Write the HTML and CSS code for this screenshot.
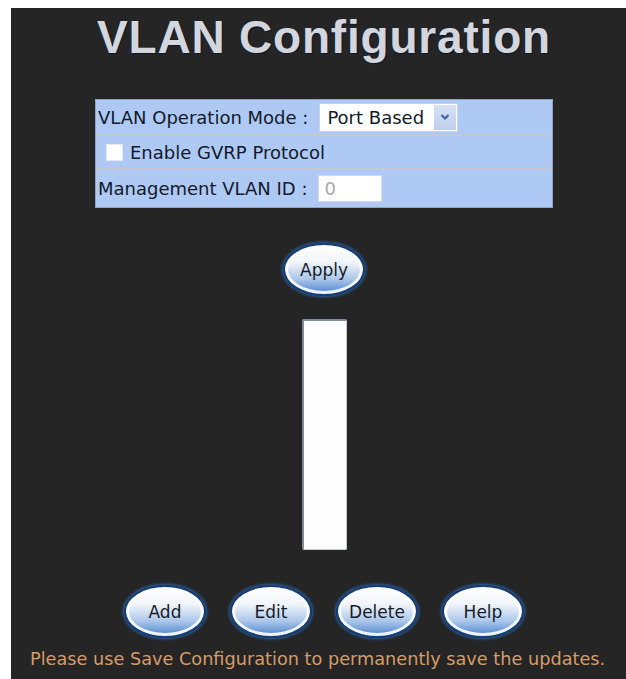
FILE: index.html
```html
<!DOCTYPE html>
<html lang="en">
<head>
    <meta charset="UTF-8">
    <meta name="viewport" content="width=device-width, initial-scale=1.0">
    <title>VLAN Configuration</title>
    <link rel="stylesheet" href="styles.css">
</head>
<body>
    <div class="page">
        <h1 class="title">VLAN Configuration</h1>

        <div class="settings">
            <div class="row">
                <span>VLAN Operation Mode :</span>
                <div class="dropdown">
                    <span class="dropdown-text">Port Based</span>
                    <span class="dropdown-arrow">
                        <svg width="10" height="8" viewBox="0 0 10 8">
                            <path d="M1.5 2 L5 5.5 L8.5 2" fill="none" stroke="#3d5f9c" stroke-width="2"/>
                        </svg>
                    </span>
                </div>
            </div>
            <div class="row row-check">
                <input type="checkbox" class="check" id="gvrp">
                <label for="gvrp">Enable GVRP Protocol</label>
            </div>
            <div class="row row-id">
                <span>Management VLAN ID :</span>
                <input type="text" class="vid" value="0">
            </div>
        </div>

        <button class="pill apply">Apply</button>

        <select class="vlan-list" size="12"></select>

        <div class="actions">
            <button class="pill">Add</button>
            <button class="pill">Edit</button>
            <button class="pill">Delete</button>
            <button class="pill">Help</button>
        </div>

        <p class="note">Please use Save Configuration to permanently save the updates.</p>
    </div>
</body>
</html>
```

FILE: styles.css
```css
html {
    overflow: hidden;
    background-color: #fff;
}
body {
    margin: 8px 0 0 11px;
    font-family: "DejaVu Sans", Verdana, sans-serif;
}
.page {
    width: 626px;
    min-height: 680px;
    background-color: #252525;
    display: flex;
    flex-direction: column;
    align-items: center;
}
.title {
    margin: 0;
    padding-top: 4px;
    font-family: "Liberation Sans", Arial, sans-serif;
    font-size: 46px;
    line-height: 50px;
    letter-spacing: 0.8px;
    font-weight: bold;
    color: #d3d6dc;
    text-shadow: 1px 1px 1px #0c1830;
}
.settings {
    width: 456px;
    margin-top: 37px;
    border: 1px solid #93a3bf;
    background-color: #afc9f5;
    font-size: 18px;
    color: #121a2a;
}
.row {
    display: flex;
    align-items: center;
    height: 34px;
    padding-left: 2px;
}
.row + .row {
    border-top: 2px solid #c4c8d2;
}
.row-check {
    height: 32px;
    padding-left: 10px;
}
.row-id {
    height: 37px;
}
.dropdown {
    display: flex;
    align-items: center;
    justify-content: space-between;
    width: 137px;
    height: 27px;
    margin-left: 11px;
    border: 1px solid #c9d3e4;
    background-color: #fff;
}
.dropdown-text {
    padding-left: 7px;
}
.dropdown-arrow {
    display: flex;
    align-items: center;
    justify-content: center;
    width: 22px;
    height: 25px;
    margin-right: 1px;
    background: linear-gradient(#d6e2f5, #bccfee);
}
.check {
    appearance: none;
    width: 17px;
    height: 17px;
    margin: 0 7px 0 0;
    border: 1px solid #e4e9f2;
    background-color: #fff;
}
.vid {
    width: 56px;
    height: 25px;
    margin-left: 10px;
    padding: 0 0 0 6px;
    border: 1px solid #d2dae6;
    font-family: inherit;
    font-size: 18px;
    color: #a9a9a9;
}
.pill {
    width: 82px;
    height: 53px;
    padding: 0;
    border: 2px solid #153f78;
    border-radius: 50%;
    background: linear-gradient(#ffffff 0%, #f0f4fa 36%, #aac6ea 70%, #4a83cc 100%);
    box-shadow: inset 0 0 0 3px rgba(255, 255, 255, 0.9), 0 0 3px 1px #2c66ad;
    font-family: "DejaVu Sans", Verdana, sans-serif;
    font-size: 17px;
    color: #161c2a;
}
.apply {
    margin-top: 35px;
}
.vlan-list {
    width: 45px;
    height: 231px;
    margin-top: 23px;
    border-style: solid;
    border-width: 2px 1px 1px 2px;
    border-color: #7d8a98 #c5ccd4 #c5ccd4 #7d8a98;
    background-color: #fdfdfd;
}
.actions {
    display: flex;
    gap: 24px;
    margin-top: 35px;
}
.note {
    align-self: stretch;
    margin: 11px 0 0;
    padding-left: 19px;
    font-size: 17.7px;
    line-height: 20px;
    color: #d69c68;
}
```
